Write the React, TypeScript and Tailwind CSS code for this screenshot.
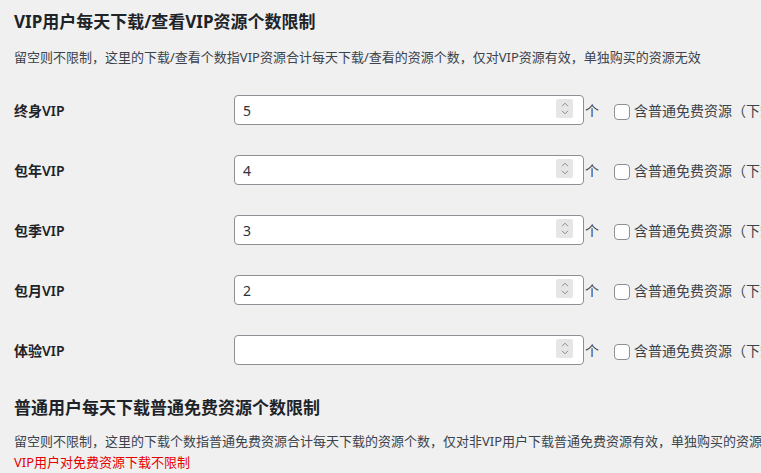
const font = "font-['Noto_Sans','Noto_Sans_CJK_SC',sans-serif]";

const rows = [
  { label: "终身VIP", value: "5" },
  { label: "包年VIP", value: "4" },
  { label: "包季VIP", value: "3" },
  { label: "包月VIP", value: "2" },
  { label: "体验VIP", value: "" },
];

function Spinner() {
  return (
    <div className="absolute right-[10px] top-[3px] flex h-[19px] w-[17px] flex-col items-center justify-center gap-[3px] rounded-[2px] bg-[#e6e6e6]">
      <svg width="8" height="5" viewBox="0 0 8 5" fill="none">
        <path d="M1 4.2L4 1.2L7 4.2" stroke="#8a8a8a" strokeWidth="1" />
      </svg>
      <svg width="8" height="5" viewBox="0 0 8 5" fill="none">
        <path d="M1 0.8L4 3.8L7 0.8" stroke="#8a8a8a" strokeWidth="1" />
      </svg>
    </div>
  );
}

function Row({ label, value }: { label: string; value: string }) {
  return (
    <div className="flex h-[60px] items-center">
      <div className="w-[220px] shrink-0 text-[14px] font-semibold text-[#1d2327]">{label}</div>
      <div className="relative h-[30px] w-[350px] shrink-0 rounded-[4px] border border-[#8c8f94] bg-white">
        <span className="absolute left-[8px] top-[4px] text-[14px] text-[#2c3338]">{value}</span>
        <Spinner />
      </div>
      <span className="ml-[1px] text-[14px] text-[#3c434a]">个</span>
      <label className="ml-[15px] flex items-center whitespace-nowrap pt-[4px]">
        <span className="h-[16px] w-[16px] shrink-0 rounded-[4px] border border-[#8c8f94] bg-white" />
        <span className="ml-[4px] -mt-[4px] text-[14px] text-[#3c434a]">含普通免费资源（下载/查看次数计入）</span>
      </label>
    </div>
  );
}

export default function App() {
  return (
    <div className={`h-[473px] w-[761px] overflow-hidden bg-[#f0f0f1] pl-[14px] ${font}`}>
      <h2 className="pt-[10px] text-[17px] font-bold leading-[24px] text-[#1d2327]">
        VIP用户每天下载/查看VIP资源个数限制
      </h2>
      <p className="mt-[13px] whitespace-nowrap text-[13px] leading-[20px] text-[#3c434a]">
        留空则不限制，这里的下载/查看个数指VIP资源合计每天下载/查看的资源个数，仅对VIP资源有效，单独购买的资源无效
      </p>
      <div className="mt-[13px]">
        {rows.map((r) => (
          <Row key={r.label} label={r.label} value={r.value} />
        ))}
      </div>
      <h2 className="mt-[16px] text-[17px] font-bold leading-[24px] text-[#1d2327]">
        普通用户每天下载普通免费资源个数限制
      </h2>
      <p className="mt-[11px] whitespace-nowrap text-[13px] leading-[21px] text-[#3c434a]">
        留空则不限制，这里的下载个数指普通免费资源合计每天下载的资源个数，仅对非VIP用户下载普通免费资源有效，单独购买的资源无效
      </p>
      <p className="whitespace-nowrap text-[13px] leading-[21px] text-[#e60000]">VIP用户对免费资源下载不限制</p>
    </div>
  );
}
